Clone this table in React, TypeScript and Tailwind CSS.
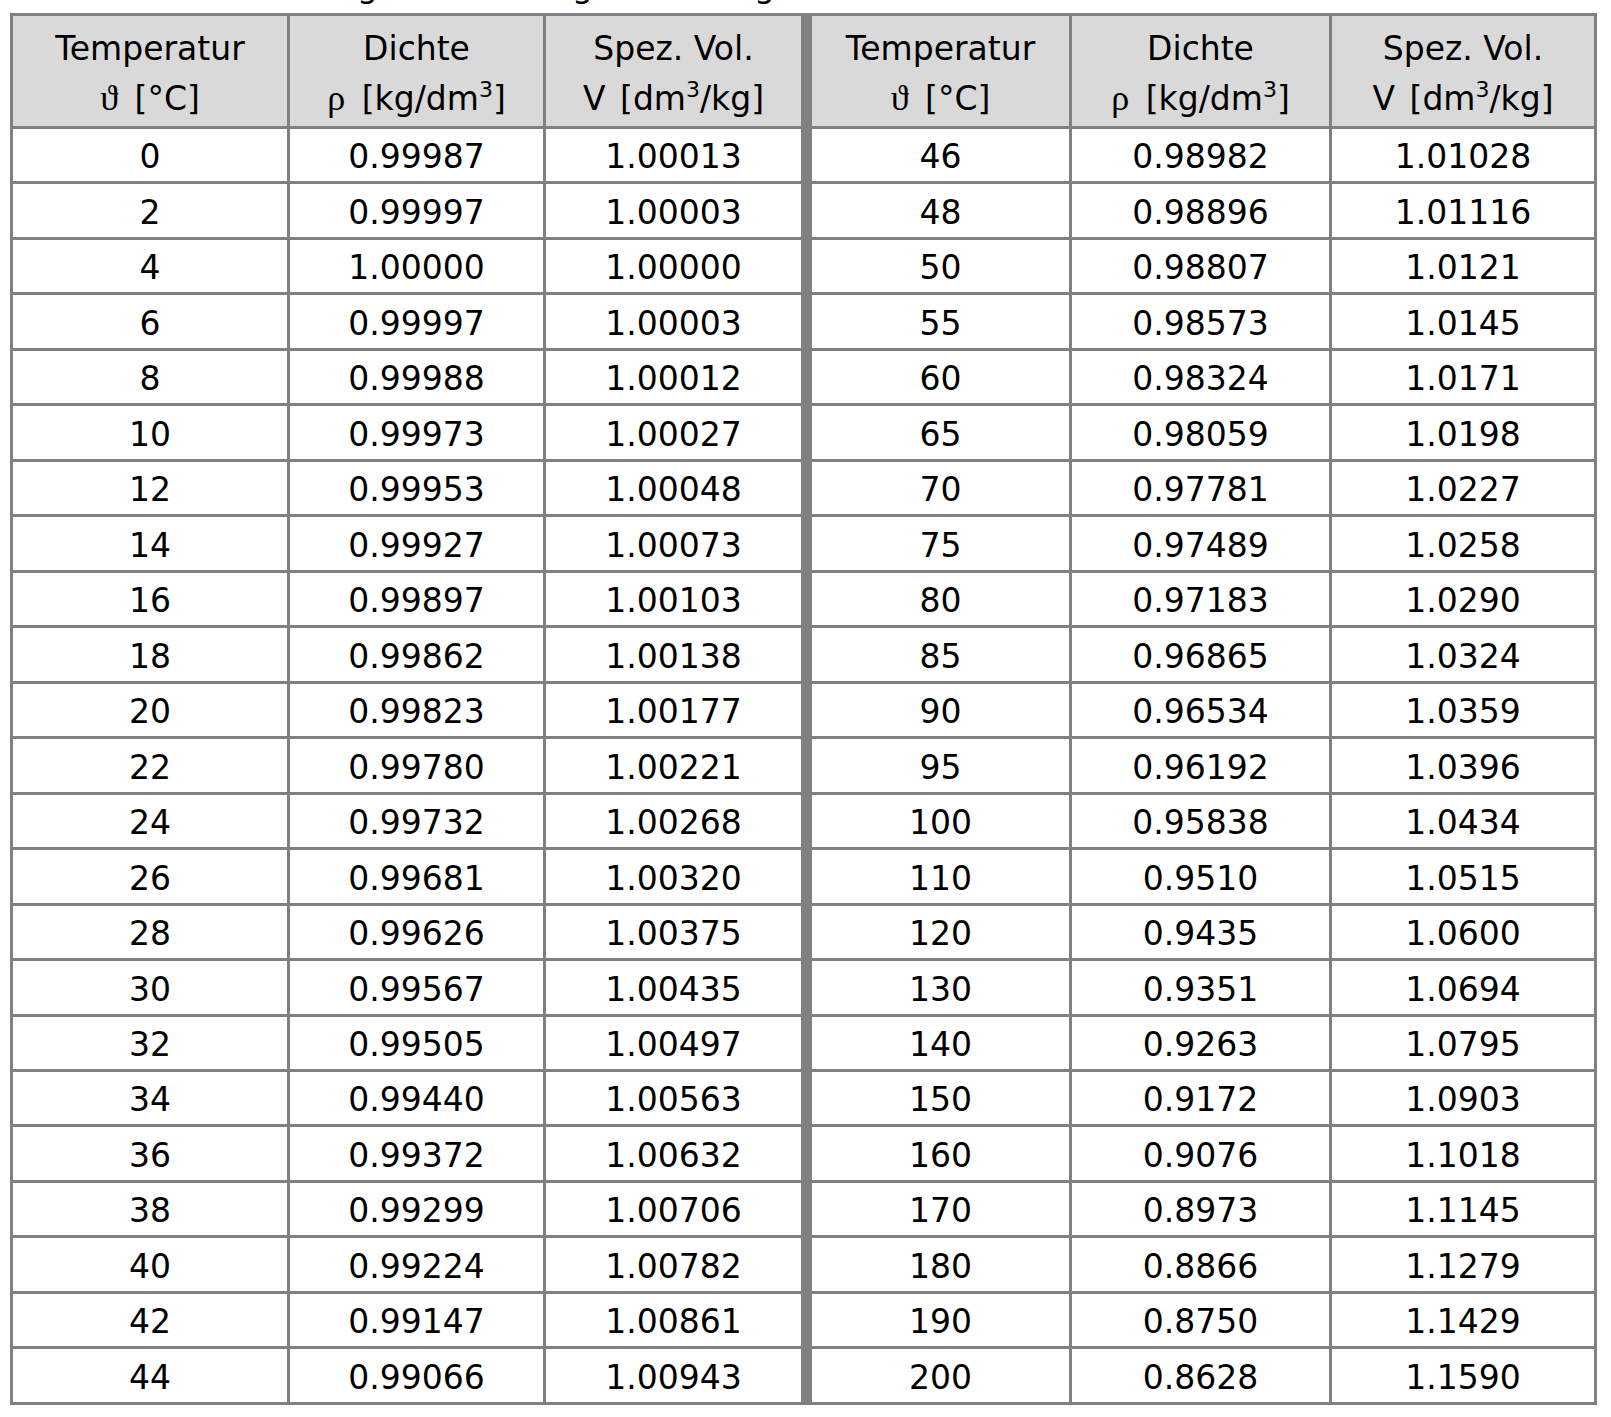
import React from "react";

const left: [string, string, string][] = [
  ["0", "0.99987", "1.00013"],
  ["2", "0.99997", "1.00003"],
  ["4", "1.00000", "1.00000"],
  ["6", "0.99997", "1.00003"],
  ["8", "0.99988", "1.00012"],
  ["10", "0.99973", "1.00027"],
  ["12", "0.99953", "1.00048"],
  ["14", "0.99927", "1.00073"],
  ["16", "0.99897", "1.00103"],
  ["18", "0.99862", "1.00138"],
  ["20", "0.99823", "1.00177"],
  ["22", "0.99780", "1.00221"],
  ["24", "0.99732", "1.00268"],
  ["26", "0.99681", "1.00320"],
  ["28", "0.99626", "1.00375"],
  ["30", "0.99567", "1.00435"],
  ["32", "0.99505", "1.00497"],
  ["34", "0.99440", "1.00563"],
  ["36", "0.99372", "1.00632"],
  ["38", "0.99299", "1.00706"],
  ["40", "0.99224", "1.00782"],
  ["42", "0.99147", "1.00861"],
  ["44", "0.99066", "1.00943"],
];

const right: [string, string, string][] = [
  ["46", "0.98982", "1.01028"],
  ["48", "0.98896", "1.01116"],
  ["50", "0.98807", "1.0121"],
  ["55", "0.98573", "1.0145"],
  ["60", "0.98324", "1.0171"],
  ["65", "0.98059", "1.0198"],
  ["70", "0.97781", "1.0227"],
  ["75", "0.97489", "1.0258"],
  ["80", "0.97183", "1.0290"],
  ["85", "0.96865", "1.0324"],
  ["90", "0.96534", "1.0359"],
  ["95", "0.96192", "1.0396"],
  ["100", "0.95838", "1.0434"],
  ["110", "0.9510", "1.0515"],
  ["120", "0.9435", "1.0600"],
  ["130", "0.9351", "1.0694"],
  ["140", "0.9263", "1.0795"],
  ["150", "0.9172", "1.0903"],
  ["160", "0.9076", "1.1018"],
  ["170", "0.8973", "1.1145"],
  ["180", "0.8866", "1.1279"],
  ["190", "0.8750", "1.1429"],
  ["200", "0.8628", "1.1590"],
];

const greek = "font-['Liberation_Serif','DejaVu_Serif',serif] text-[36px] leading-none mr-[6px]";

function Sup() {
  return <span className="text-[22px] leading-none relative -top-[13px]">3</span>;
}

function Head({ top, sym, unit, divider }: { top: string; sym: string; unit: React.ReactNode; divider?: boolean }) {
  return (
    <div
      className={`bg-[#d9d9d9] flex flex-col items-center justify-center leading-[50px] pt-[5px] ${divider ? "mr-[8px]" : ""}`}
    >
      <div className="h-[50px]">{top}</div>
      <div className="h-[50px] whitespace-nowrap">
        {sym === "V" ? <span className="mr-[4px]">V</span> : <span className={greek}>{sym}</span>} {unit}
      </div>
    </div>
  );
}

function Cell({ v, divider }: { v: string; divider?: boolean }) {
  return (
    <div className={`bg-white flex items-center justify-center pt-[4px] ${divider ? "mr-[8px]" : ""}`}>
      {v}
    </div>
  );
}

export default function App() {
  const dens = <>[kg/dm<Sup />]</>;
  const vol = <>[dm<Sup />/kg]</>;
  return (
    <div className="bg-white min-h-[1417px] w-[1611px] font-['DejaVu_Sans',sans-serif] text-[33px] text-black">
      <div className="h-[13px] overflow-hidden pl-[10px]">
        <div className="-mt-[31px] leading-[33px] flex whitespace-pre">
          <span className="ml-[347px]">g</span>
          <span className="ml-[194px]">g</span>
          <span className="ml-[161px]">g</span>
        </div>
      </div>
      <div className="pl-[10px]">
        <div className="w-[1587px] bg-[#808080] p-[3px] grid gap-[3px] grid-cols-[274px_253px_263px_257px_257px_262px] grid-rows-[110px_repeat(23,52.48px)]">
          <Head top="Temperatur" sym="ϑ" unit="[°C]" />
          <Head top="Dichte" sym="ρ" unit={dens} />
          <Head top="Spez. Vol." sym="V" unit={vol} divider />
          <Head top="Temperatur" sym="ϑ" unit="[°C]" />
          <Head top="Dichte" sym="ρ" unit={dens} />
          <Head top="Spez. Vol." sym="V" unit={vol} />
          {left.map((l, i) => {
            const r = right[i];
            return (
              <React.Fragment key={i}>
                <Cell v={l[0]} />
                <Cell v={l[1]} />
                <Cell v={l[2]} divider />
                <Cell v={r[0]} />
                <Cell v={r[1]} />
                <Cell v={r[2]} />
              </React.Fragment>
            );
          })}
        </div>
      </div>
    </div>
  );
}
